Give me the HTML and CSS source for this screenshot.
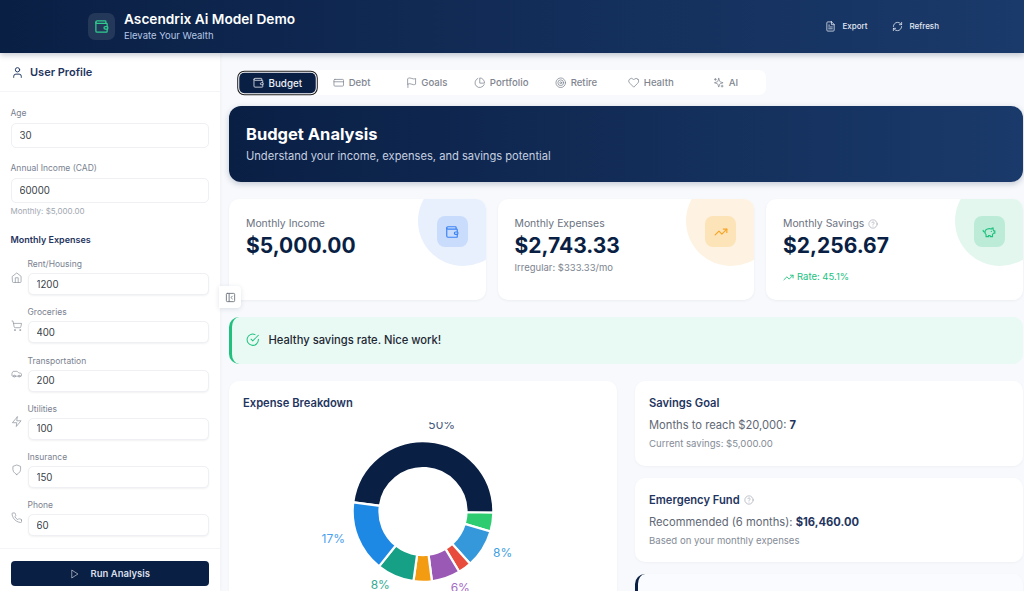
FILE: index.html
```html
<!DOCTYPE html>
<html lang="en">
<head>
  <meta charset="UTF-8">
  <title>Ascendrix Ai Model Demo</title>
  <link rel="stylesheet" href="styles.css">
</head>
<body>
  <svg class="sprite" aria-hidden="true">
    <symbol id="i-wallet" viewBox="0 0 24 24"><path d="M19 7V4a1 1 0 0 0-1-1H5a2 2 0 0 0 0 4h15a1 1 0 0 1 1 1v4h-3a2 2 0 0 0 0 4h3a1 1 0 0 0 1-1v-2a1 1 0 0 0-1-1"/><path d="M3 5v14a2 2 0 0 0 2 2h15a1 1 0 0 0 1-1v-4"/></symbol>
    <symbol id="i-user" viewBox="0 0 24 24"><path d="M19 21v-2a4 4 0 0 0-4-4H9a4 4 0 0 0-4 4v2"/><circle cx="12" cy="7" r="4"/></symbol>
    <symbol id="i-card" viewBox="0 0 24 24"><rect x="2" y="5" width="20" height="14" rx="2"/><path d="M2 10h20"/></symbol>
    <symbol id="i-flag" viewBox="0 0 24 24"><path d="M4 15s1-1 4-1 5 2 8 2 4-1 4-1V3s-1 1-4 1-5-2-8-2-4 1-4 1z"/><path d="M4 22v-7"/></symbol>
    <symbol id="i-pie" viewBox="0 0 24 24"><path d="M21.21 15.89A10 10 0 1 1 8 2.83"/><path d="M22 12A10 10 0 0 0 12 2v10z"/></symbol>
    <symbol id="i-target" viewBox="0 0 24 24"><circle cx="12" cy="12" r="10"/><circle cx="12" cy="12" r="6"/><circle cx="12" cy="12" r="2"/></symbol>
    <symbol id="i-heart" viewBox="0 0 24 24"><path d="M20.84 4.61a5.5 5.5 0 0 0-7.78 0L12 5.67l-1.06-1.06a5.5 5.5 0 0 0-7.78 7.78l1.06 1.06L12 21.23l7.78-7.78 1.06-1.06a5.5 5.5 0 0 0 0-7.78z"/></symbol>
    <symbol id="i-sparkles" viewBox="0 0 24 24"><path d="m12 3-1.912 5.813a2 2 0 0 1-1.275 1.275L3 12l5.813 1.912a2 2 0 0 1 1.275 1.275L12 21l1.912-5.813a2 2 0 0 1 1.275-1.275L21 12l-5.813-1.912a2 2 0 0 1-1.275-1.275L12 3Z"/><path d="M5 3v4"/><path d="M19 17v4"/><path d="M3 5h4"/><path d="M17 19h4"/></symbol>
    <symbol id="i-home" viewBox="0 0 24 24"><path d="m3 9 9-7 9 7v11a2 2 0 0 1-2 2H5a2 2 0 0 1-2-2z"/><path d="M9 22V12h6v10"/></symbol>
    <symbol id="i-cart" viewBox="0 0 24 24"><circle cx="8" cy="21" r="1"/><circle cx="19" cy="21" r="1"/><path d="M2.05 2.05h2l2.66 12.42a2 2 0 0 0 2 1.58h9.78a2 2 0 0 0 1.95-1.57l1.65-7.43H5.12"/></symbol>
    <symbol id="i-car" viewBox="0 0 24 24"><path d="M19 17h2c.6 0 1-.4 1-1v-3c0-.9-.7-1.7-1.5-1.9C18.7 10.6 16 10 16 10s-1.3-1.4-2.2-2.3c-.5-.4-1.1-.7-1.8-.7H5c-.6 0-1.1.4-1.4.9l-1.4 2.9A3.7 3.7 0 0 0 2 12v4c0 .6.4 1 1 1h2"/><circle cx="7" cy="17" r="2"/><path d="M9 17h6"/><circle cx="17" cy="17" r="2"/></symbol>
    <symbol id="i-zap" viewBox="0 0 24 24"><path d="M13 2 3 14h9l-1 8 10-12h-9l1-8z"/></symbol>
    <symbol id="i-shield" viewBox="0 0 24 24"><path d="M12 22s8-4 8-10V5l-8-3-8 3v7c0 6 8 10 8 10z"/></symbol>
    <symbol id="i-phone" viewBox="0 0 24 24"><path d="M22 16.92v3a2 2 0 0 1-2.18 2 19.79 19.79 0 0 1-8.63-3.07 19.5 19.5 0 0 1-6-6 19.79 19.79 0 0 1-3.07-8.67A2 2 0 0 1 4.11 2h3a2 2 0 0 1 2 1.72 12.84 12.84 0 0 0 .7 2.81 2 2 0 0 1-.45 2.11L8.09 9.91a16 16 0 0 0 6 6l1.27-1.27a2 2 0 0 1 2.11-.45 12.84 12.84 0 0 0 2.81.7A2 2 0 0 1 22 16.92z"/></symbol>
    <symbol id="i-play" viewBox="0 0 24 24"><path d="M5 3l14 9-14 9z"/></symbol>
    <symbol id="i-file" viewBox="0 0 24 24"><path d="M14.5 2H6a2 2 0 0 0-2 2v16a2 2 0 0 0 2 2h12a2 2 0 0 0 2-2V7.5L14.5 2z"/><path d="M14 2v6h6"/><path d="M16 13H8"/><path d="M16 17H8"/><path d="M10 9H8"/></symbol>
    <symbol id="i-refresh" viewBox="0 0 24 24"><path d="M3 12a9 9 0 0 1 9-9 9.75 9.75 0 0 1 6.74 2.74L21 8"/><path d="M21 3v5h-5"/><path d="M21 12a9 9 0 0 1-9 9 9.75 9.75 0 0 1-6.74-2.74L3 16"/><path d="M8 16H3v5"/></symbol>
    <symbol id="i-trend" viewBox="0 0 24 24"><path d="M22 7l-8.5 8.5-5-5L2 17"/><path d="M16 7h6v6"/></symbol>
    <symbol id="i-piggy" viewBox="0 0 24 24"><path d="M19 5c-1.5 0-2.8 1.4-3 2-3.5-1.5-11-.3-11 5 0 1.8 0 3 2 4.5V20h4v-2h3v2h4v-4c1-.5 1.7-1 2-2h2v-4h-2c0-1-.5-1.5-1-2V5z"/><path d="M2 9v1c0 1.1.9 2 2 2h1"/><path d="M16 11h.01"/></symbol>
    <symbol id="i-check" viewBox="0 0 24 24"><path d="M22 11.08V12a10 10 0 1 1-5.93-9.14"/><path d="M22 4 12 14.01l-3-3"/></symbol>
    <symbol id="i-help" viewBox="0 0 24 24"><circle cx="12" cy="12" r="10"/><path d="M9.09 9a3 3 0 0 1 5.83 1c0 2-3 3-3 3"/><path d="M12 17h.01"/></symbol>
    <symbol id="i-panel" viewBox="0 0 24 24"><rect x="3" y="3" width="18" height="18" rx="2"/><path d="M9 3v18"/><path d="m16 15-3-3 3-3"/></symbol>
  </svg>

  <header class="topbar">
    <div class="brand">
      <div class="brand-logo"><svg class="icon"><use href="#i-wallet"/></svg></div>
      <div>
        <div class="brand-title">Ascendrix Ai Model Demo</div>
        <div class="brand-sub">Elevate Your Wealth</div>
      </div>
    </div>
    <div class="top-actions">
      <div class="top-action"><svg class="icon"><use href="#i-file"/></svg>Export</div>
      <div class="top-action"><svg class="icon"><use href="#i-refresh"/></svg>Refresh</div>
    </div>
  </header>

  <div class="app">
    <aside class="sidebar">
      <div class="side-head"><svg class="icon"><use href="#i-user"/></svg>User Profile</div>
      <div class="side-form">
        <div class="field">
          <label>Age</label>
          <input class="text-input" type="text" value="30">
        </div>
        <div class="field">
          <label>Annual Income (CAD)</label>
          <input class="text-input" type="text" value="60000">
          <div class="hint">Monthly: $5,000.00</div>
        </div>
        <div class="side-section">Monthly Expenses</div>
        <div class="expense-row">
          <svg class="icon"><use href="#i-home"/></svg>
          <div class="expense-field"><label>Rent/Housing</label><input class="text-input small" type="text" value="1200"></div>
        </div>
        <div class="expense-row">
          <svg class="icon"><use href="#i-cart"/></svg>
          <div class="expense-field"><label>Groceries</label><input class="text-input small" type="text" value="400"></div>
        </div>
        <div class="expense-row">
          <svg class="icon"><use href="#i-car"/></svg>
          <div class="expense-field"><label>Transportation</label><input class="text-input small" type="text" value="200"></div>
        </div>
        <div class="expense-row">
          <svg class="icon"><use href="#i-zap"/></svg>
          <div class="expense-field"><label>Utilities</label><input class="text-input small" type="text" value="100"></div>
        </div>
        <div class="expense-row">
          <svg class="icon"><use href="#i-shield"/></svg>
          <div class="expense-field"><label>Insurance</label><input class="text-input small" type="text" value="150"></div>
        </div>
        <div class="expense-row">
          <svg class="icon"><use href="#i-phone"/></svg>
          <div class="expense-field"><label>Phone</label><input class="text-input small" type="text" value="60"></div>
        </div>
      </div>
      <div class="side-foot">
        <button class="run-btn"><svg class="icon"><use href="#i-play"/></svg>Run Analysis</button>
      </div>
    </aside>

    <button class="side-toggle"><svg class="icon"><use href="#i-panel"/></svg></button>

    <main class="content">
      <nav class="tabs">
        <div class="tab active"><svg class="icon"><use href="#i-wallet"/></svg>Budget</div>
        <div class="tab"><svg class="icon"><use href="#i-card"/></svg>Debt</div>
        <div class="tab"><svg class="icon"><use href="#i-flag"/></svg>Goals</div>
        <div class="tab"><svg class="icon"><use href="#i-pie"/></svg>Portfolio</div>
        <div class="tab"><svg class="icon"><use href="#i-target"/></svg>Retire</div>
        <div class="tab"><svg class="icon"><use href="#i-heart"/></svg>Health</div>
        <div class="tab"><svg class="icon"><use href="#i-sparkles"/></svg>AI</div>
      </nav>

      <section class="hero">
        <h1>Budget Analysis</h1>
        <p>Understand your income, expenses, and savings potential</p>
      </section>

      <section class="stats">
        <div class="stat blue">
          <div class="stat-icon"><svg class="icon"><use href="#i-wallet"/></svg></div>
          <div class="stat-label">Monthly Income</div>
          <div class="stat-value">$5,000.00</div>
        </div>
        <div class="stat orange">
          <div class="stat-icon"><svg class="icon"><use href="#i-trend"/></svg></div>
          <div class="stat-label">Monthly Expenses</div>
          <div class="stat-value">$2,743.33</div>
          <div class="stat-note">Irregular: $333.33/mo</div>
        </div>
        <div class="stat green">
          <div class="stat-icon"><svg class="icon"><use href="#i-piggy"/></svg></div>
          <div class="stat-label">Monthly Savings <svg class="icon help"><use href="#i-help"/></svg></div>
          <div class="stat-value">$2,256.67</div>
          <div class="stat-rate"><svg class="icon"><use href="#i-trend"/></svg>Rate: 45.1%</div>
        </div>
      </section>

      <div class="alert"><svg class="icon"><use href="#i-check"/></svg>Healthy savings rate. Nice work!</div>

      <section class="lower">
        <div class="chart-card">
          <h3 class="card-title">Expense Breakdown</h3>
          <svg class="donut" viewBox="0 0 388 175">
            <g transform="translate(194 89.5) scale(1.012)" stroke="#fff" stroke-width="2.2">
              <path fill="#0a1f44" d="M-68.9-9.07A69.5 69.5 0 0 1 69.49 1.21L42.99.75A43 43 0 0 0-42.63-5.61Z"/>
              <path fill="#2ecc71" d="M69.49 1.21A69.5 69.5 0 0 1 66.64 19.74L41.23 12.21A43 43 0 0 0 42.99.75Z"/>
              <path fill="#3498db" d="M66.64 19.74A69.5 69.5 0 0 1 46.5 51.65L28.77 31.95A43 43 0 0 0 41.23 12.21Z"/>
              <path fill="#e74c3c" d="M46.5 51.65A69.5 69.5 0 0 1 35.79 59.57L22.15 36.86A43 43 0 0 0 28.77 31.95Z"/>
              <path fill="#9b59b6" d="M35.79 59.57A69.5 69.5 0 0 1 8.83 68.94L5.46 42.65A43 43 0 0 0 22.15 36.86Z"/>
              <path fill="#f39c12" d="M8.83 68.94A69.5 69.5 0 0 1-9.43 68.85L-5.84 42.6A43 43 0 0 0 5.46 42.65Z"/>
              <path fill="#16a085" d="M-9.43 68.85A69.5 69.5 0 0 1-43.45 54.24L-26.88 33.56A43 43 0 0 0-5.84 42.6Z"/>
              <path fill="#1e88e5" d="M-43.45 54.24A69.5 69.5 0 0 1-68.9-9.07L-42.63-5.61A43 43 0 0 0-26.88 33.56Z"/>
            </g>
            <text class="pct navy" x="212.7" y="6.5">50%</text>
            <text class="pct lblue" x="104.3" y="121.3">17%</text>
            <text class="pct sky" x="273.7" y="135.3">8%</text>
            <text class="pct teal" x="151.3" y="167">8%</text>
            <text class="pct violet" x="231.3" y="169.6">6%</text>
          </svg>
        </div>
        <div class="side-cards">
          <div class="info-card">
            <h3 class="card-title">Savings Goal</h3>
            <p class="info-line">Months to reach $20,000: <strong>7</strong></p>
            <p class="info-note">Current savings: $5,000.00</p>
          </div>
          <div class="info-card">
            <h3 class="card-title">Emergency Fund <svg class="icon help"><use href="#i-help"/></svg></h3>
            <p class="info-line">Recommended (6 months): <strong>$16,460.00</strong></p>
            <p class="info-note">Based on your monthly expenses</p>
          </div>
          <div class="info-card pending"></div>
        </div>
      </section>
    </main>
  </div>
</body>
</html>
```

FILE: styles.css
```css
* {
  margin: 0;
  padding: 0;
  box-sizing: border-box;
}

html, body {
  height: 100%;
  overflow: hidden;
}

body {
  font-family: 'Inter', 'Liberation Sans', sans-serif;
  background: #f7f9fc;
  color: #0a1f44;
  display: flex;
  flex-direction: column;
}

.sprite {
  display: none;
}

.icon {
  width: 12px;
  height: 12px;
  fill: none;
  stroke: currentColor;
  stroke-width: 2;
  stroke-linecap: round;
  stroke-linejoin: round;
  flex-shrink: 0;
}

/* Top bar */
.topbar {
  height: 53px;
  flex-shrink: 0;
  padding: 0 85px 1px 88px;
  display: flex;
  align-items: center;
  justify-content: space-between;
  background: linear-gradient(90deg, #0a1f44 0%, #1a3a6b 100%);
  box-shadow: 0 2px 6px rgba(10,31,68,0.25);
  position: relative;
  z-index: 3;
}

.brand {
  display: flex;
  align-items: center;
  gap: 9px;
}

.brand-logo {
  width: 27px;
  height: 27px;
  border-radius: 7px;
  background: rgba(255,255,255,0.1);
  color: #2ecc8f;
  display: flex;
  align-items: center;
  justify-content: center;
}

.brand-logo .icon {
  width: 15px;
  height: 15px;
}

.brand-title {
  font-size: 13.7px;
  font-weight: 600;
  line-height: 16px;
  color: #fff;
}

.brand-sub {
  font-size: 9.5px;
  line-height: 12px;
  margin-top: 3px;
  color: #b4c6e4;
}

.top-actions {
  display: flex;
  gap: 25px;
}

.top-action {
  display: flex;
  align-items: center;
  gap: 6px;
  font-size: 8px;
  font-weight: 500;
  color: #e3e9f3;
}

.top-action .icon {
  width: 11px;
  height: 11px;
  stroke-width: 1.7;
}

/* Layout */
.app {
  flex: 1;
  min-height: 0;
  display: flex;
  position: relative;
}

.sidebar {
  width: 220px;
  flex-shrink: 0;
  background: #fff;
  display: flex;
  flex-direction: column;
  box-shadow: 1px 0 3px rgba(10,31,68,0.03);
}

.side-head {
  height: 39px;
  padding: 0 10px;
  display: flex;
  align-items: center;
  gap: 6px;
  font-size: 11px;
  font-weight: 600;
  color: #1f3560;
  border-bottom: 1px solid #f4f5f8;
}

.side-head .icon {
  width: 13px;
  height: 13px;
  margin-left: 1px;
  stroke-width: 1.8;
}

.side-form {
  flex: 1;
  min-height: 0;
  overflow: hidden;
  padding: 16px 11px 0 10.5px;
}

.field {
  margin-bottom: 15px;
}

label {
  display: block;
  font-size: 8.5px;
  line-height: 10px;
  color: #7a8290;
  margin-bottom: 5px;
}

.text-input {
  display: block;
  width: 100%;
  height: 25px;
  padding: 0 8px;
  font-family: inherit;
  font-size: 9.7px;
  color: #3a3f47;
  background: #fff;
  border: 1px solid #eef0f3;
  border-radius: 5px;
  outline: none;
}

.text-input.small {
  height: 22px;
  box-shadow: 0 1px 2px rgba(10,31,68,0.06);
}

.hint {
  font-size: 8px;
  line-height: 10px;
  color: #a1a7b1;
  margin-top: 3px;
}

.field:nth-child(2) {
  margin-bottom: 18px;
}

.side-section {
  font-size: 9px;
  font-weight: 600;
  line-height: 11px;
  color: #1f3560;
  margin-bottom: 14.3px;
}

.expense-row {
  display: flex;
  align-items: center;
  gap: 5.5px;
  margin-bottom: 12.2px;
}

.expense-row .icon {
  width: 11.5px;
  height: 11.5px;
  stroke-width: 1.5;
  color: #8d949f;
}

.expense-row label {
  margin-bottom: 4px;
}

.expense-field {
  flex: 1;
  min-width: 0;
}

.side-foot {
  height: 43px;
  flex-shrink: 0;
  padding: 12px 11px 0 10.5px;
  border-top: 1px solid #f4f5f8;
  background: #fff;
}

.run-btn {
  width: 100%;
  height: 25px;
  border: none;
  border-radius: 4px;
  background: #0a1f44;
  color: #d9dfe9;
  font-family: inherit;
  font-size: 9.5px;
  font-weight: 600;
  display: flex;
  align-items: center;
  justify-content: center;
  gap: 11px;
}

.run-btn .icon {
  width: 10px;
  height: 10px;
  stroke-width: 1.5;
}

/* Sits over the sidebar edge */
.side-toggle {
  position: absolute;
  left: 219px;
  top: 233px;
  width: 22px;
  height: 22px;
  border: none;
  border-radius: 0 4px 4px 0;
  background: #fff;
  color: #6f7680;
  box-shadow: 0 1px 5px rgba(10,31,68,0.12);
  display: flex;
  align-items: center;
  justify-content: center;
  z-index: 2;
}

.side-toggle .icon {
  width: 11px;
  height: 11px;
}

.content {
  flex: 1;
  min-width: 0;
  overflow: hidden;
  padding: 17px 1.5px 0 9px;
}

/* Tabs */
.tabs {
  width: 529px;
  height: 25px;
  margin: 0 0 11px 8px;
  padding: 2.5px 2.6px;
  background: #fff;
  border-radius: 7px;
  display: flex;
}

.tab {
  width: 74.8px;
  height: 20px;
  border-radius: 5px;
  display: flex;
  align-items: center;
  justify-content: center;
  gap: 4px;
  font-size: 9.6px;
  font-weight: 500;
  color: #7f8590;
}

.tab .icon {
  width: 11.5px;
  height: 11.5px;
  stroke-width: 1.6;
}

.tab.active {
  background: #0a1f44;
  color: #eef1f6;
  transform: scale(1.02);
  outline: 1.3px solid #1d1d1d;
  outline-offset: 1.2px;
}

/* Hero */
.hero {
  height: 76px;
  margin-bottom: 17px;
  padding: 18px 17px 0;
  border-radius: 12px;
  background: linear-gradient(90deg, #0a1f44 0%, #1a3a6b 100%);
  box-shadow: 0 2px 6px rgba(10,31,68,0.22);
  color: #fff;
}

.hero h1 {
  font-size: 16.5px;
  font-weight: 700;
  line-height: 20px;
}

.hero p {
  font-size: 11.15px;
  line-height: 14px;
  margin-top: 5px;
  color: #c6d0e0;
}

/* Stat cards */
.stats {
  display: grid;
  grid-template-columns: repeat(3, 1fr);
  gap: 12px;
  margin-bottom: 17px;
}

.stat {
  height: 101px;
  padding: 18px 17px 0;
  border-radius: 10px;
  background: #fff;
  box-shadow: 0 1px 3px rgba(10,31,68,0.05);
  position: relative;
  overflow: hidden;
}

.stat::before {
  content: '';
  position: absolute;
  top: -23px;
  right: -22px;
  width: 90px;
  height: 90px;
  border-radius: 50%;
}

.stat-icon {
  position: absolute;
  top: 17px;
  right: 18px;
  width: 31px;
  height: 31px;
  border-radius: 8px;
  display: flex;
  align-items: center;
  justify-content: center;
}

.stat-icon .icon {
  width: 14px;
  height: 14px;
}

.blue::before { background: #e8f0fe; }
.blue .stat-icon { background: #c9dcfb; color: #3b82f6; }
.orange::before { background: #fef3e2; }
.orange .stat-icon { background: #fde3b8; color: #f5a524; }
.green::before { background: #e4f7ef; }
.green .stat-icon { background: #bcebd8; color: #20c17f; }

.stat-label {
  display: flex;
  align-items: center;
  gap: 4px;
  font-size: 10.4px;
  line-height: 13px;
  color: #6b7280;
}

.help {
  width: 10px;
  height: 10px;
  stroke-width: 1.5;
  color: #9aa1ac;
}

.stat-value {
  font-size: 21px;
  font-weight: 700;
  line-height: 27px;
  margin-top: 2px;
  color: #0a1f44;
}

.stat-note {
  font-size: 9.5px;
  line-height: 12px;
  margin-top: 3px;
  color: #7d8490;
}

.stat-rate {
  display: flex;
  align-items: center;
  gap: 3px;
  font-size: 9.5px;
  line-height: 12px;
  margin-top: 12px;
  color: #20c17f;
}

.stat-rate .icon {
  width: 11px;
  height: 11px;
}

/* Alert */
.alert {
  height: 47px;
  margin-bottom: 17px;
  padding: 0 0 1px 14px;
  display: flex;
  align-items: center;
  gap: 9px;
  font-size: 11.2px;
  font-weight: 500;
  color: #1f2733;
  background: #e8faf3;
  border-left: 3px solid #20c17f;
  border-radius: 10px;
}

.alert .icon {
  width: 13.5px;
  height: 13.5px;
  color: #20c17f;
  stroke-width: 1.8;
}

/* Lower grid */
.lower {
  display: grid;
  grid-template-columns: 388px 1fr;
  gap: 18px;
  align-items: start;
}

.chart-card {
  height: 300px;
  padding-top: 16px;
  background: #fff;
  border-radius: 10px;
  box-shadow: 0 1px 3px rgba(10,31,68,0.04);
}

.card-title {
  display: flex;
  align-items: center;
  gap: 4px;
  font-size: 11.2px;
  font-weight: 600;
  line-height: 13px;
  color: #1f3560;
}

.chart-card .card-title {
  padding-left: 14px;
  margin-bottom: 12px;
}

.donut {
  display: block;
  width: 388px;
  height: 175px;
}

.pct {
  font-family: 'Inter', 'Liberation Sans', sans-serif;
  font-size: 12px;
  text-anchor: middle;
}

.navy { fill: #46577a; }
.lblue { fill: #4aa0ee; }
.sky { fill: #3f9fe0; }
.teal { fill: #35ab94; }
.violet { fill: #a36cc0; }

.side-cards {
  display: flex;
  flex-direction: column;
  gap: 12px;
}

.info-card {
  height: 84.5px;
  padding: 16px 14px 0;
  background: #fff;
  border-radius: 10px;
  box-shadow: 0 1px 3px rgba(10,31,68,0.04);
}

.info-line {
  font-size: 11.2px;
  line-height: 14px;
  margin-top: 8px;
  color: #5f6875;
}

.info-line strong {
  font-weight: 700;
  color: #1f3560;
}

.info-note {
  font-size: 9.6px;
  line-height: 12px;
  margin-top: 6px;
  color: #858c97;
}

.pending {
  height: 60px;
  background: #f9fbfe;
  border-left: 3px solid #0a1f44;
}
```
